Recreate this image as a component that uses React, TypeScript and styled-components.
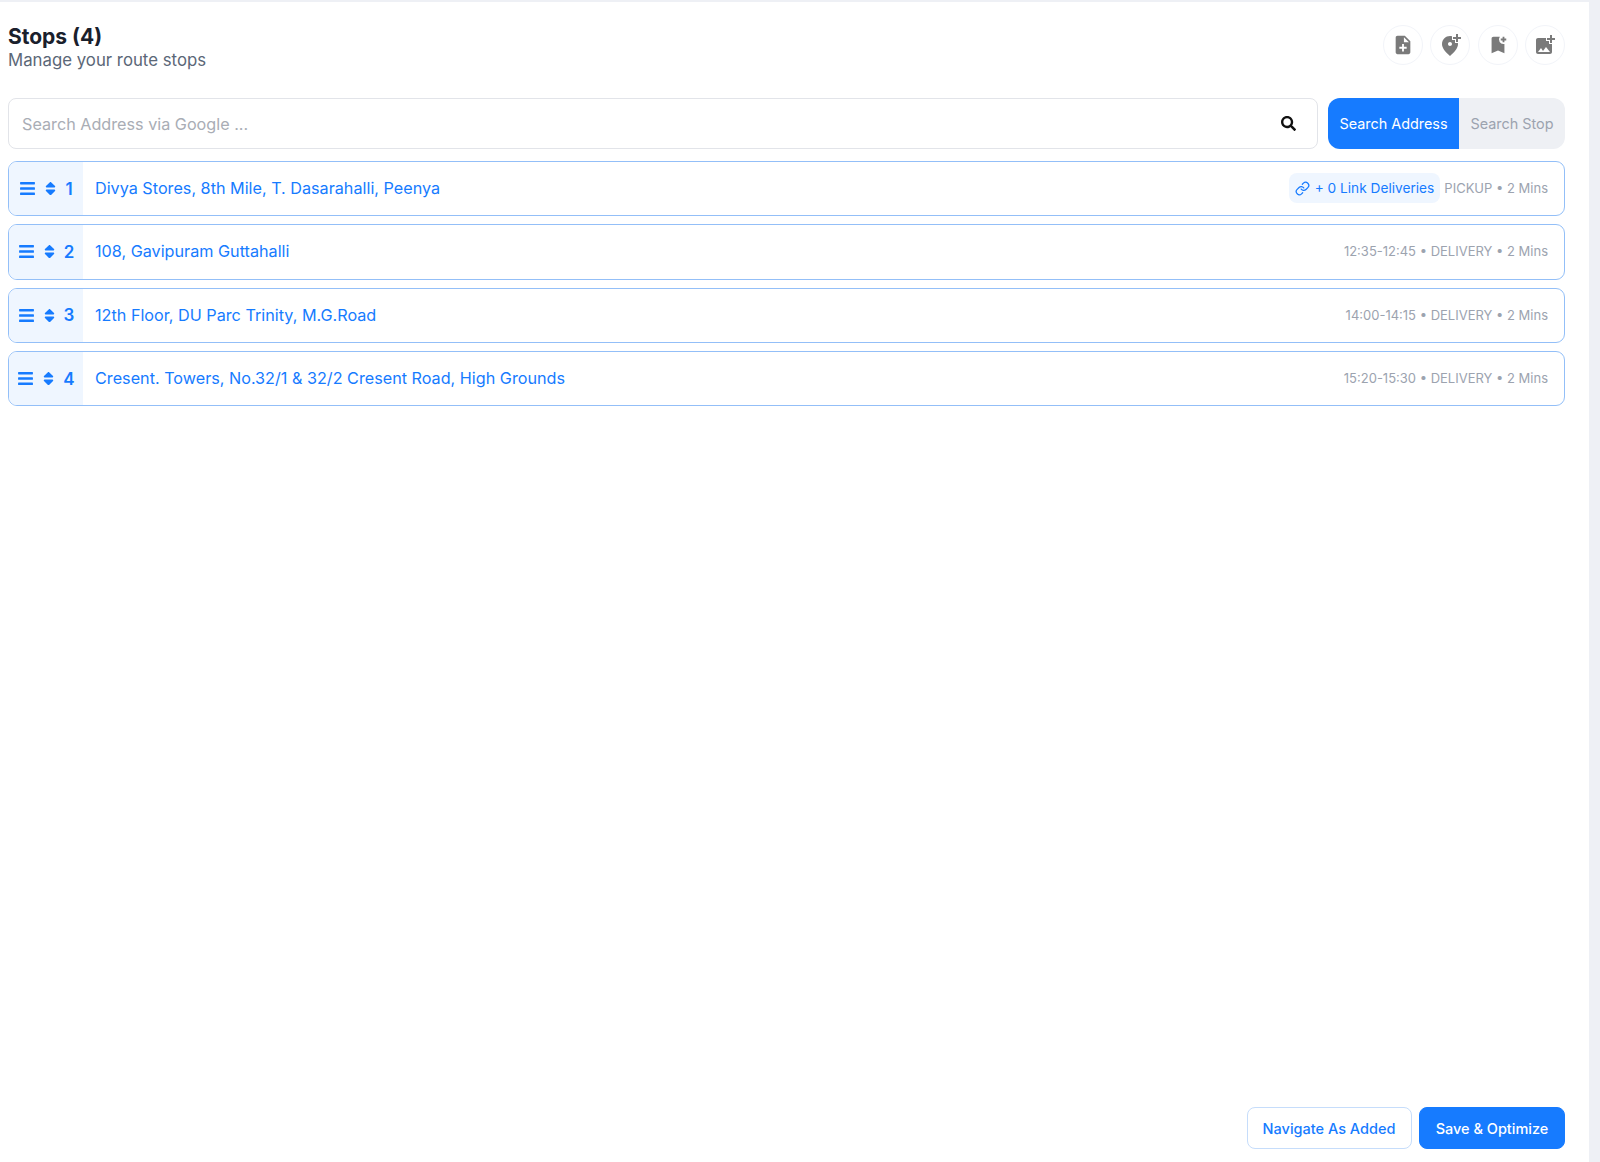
import React from 'react';
import styled, { createGlobalStyle } from 'styled-components';
import { MdNoteAdd, MdAddLocationAlt, MdBookmarkAdd, MdAddPhotoAlternate } from 'react-icons/md';
import { FaBars, FaSort, FaSearch } from 'react-icons/fa';
import { FiLink } from 'react-icons/fi';

const GlobalStyle = createGlobalStyle`
  html, body {
    margin: 0;
    padding: 0;
    background: #eef0f5;
    font-family: 'Inter', 'Liberation Sans', sans-serif;
  }
  * { box-sizing: border-box; }
`;

const Page = styled.div`
  width: 1589px;
  height: 1162px;
  margin-top: 2px;
  padding: 0 24px 15px 8px;
  background: #ffffff;
  display: flex;
  flex-direction: column;
`;

const Header = styled.div`
  display: flex;
  justify-content: space-between;
  align-items: flex-start;
  height: 96px;
  padding-top: 23px;
`;

const Title = styled.div`
  font-size: 21px;
  line-height: 24px;
  font-weight: 700;
  color: #1a202c;
`;

const Subtitle = styled.div`
  font-size: 16.8px;
  line-height: 23px;
  color: #5b6777;
`;

const IconRow = styled.div`
  display: flex;
  gap: 7.5px;
`;

const IconCircle = styled.button`
  width: 40px;
  height: 40px;
  border-radius: 50%;
  border: 1px solid #f2f4f9;
  background: #ffffff;
  color: #7a7a7a;
  display: flex;
  align-items: center;
  justify-content: center;
  padding: 0;
`;

const SearchRow = styled.div`
  display: flex;
  gap: 10px;
  height: 51px;
`;

const SearchBox = styled.div`
  flex: 1;
  display: flex;
  align-items: center;
  justify-content: space-between;
  padding: 0 21px 0 13px;
  border: 1px solid #e2e4e9;
  border-radius: 8px;
`;

const Placeholder = styled.span`
  font-size: 16.2px;
  color: #a9adb5;
`;

const Toggle = styled.div`
  display: flex;
  height: 100%;
  border-radius: 12px;
  overflow: hidden;
`;

const ToggleOption = styled.div<{ $active?: boolean }>`
  display: flex;
  align-items: center;
  justify-content: center;
  width: ${({ $active }) => ($active ? '131px' : '106px')};
  font-size: 14.4px;
  background: ${({ $active }) => ($active ? '#167bff' : '#eef0f4')};
  color: ${({ $active }) => ($active ? '#ffffff' : '#9ca3af')};
`;

const StopList = styled.div`
  display: flex;
  flex-direction: column;
  gap: 8px;
  margin-top: 12px;
`;

const StopRow = styled.div`
  display: flex;
  align-items: stretch;
  height: 55.3px;
  border: 1.4px solid #93bff8;
  border-bottom-width: 1.8px;
  border-radius: 9px;
  overflow: hidden;
`;

const Handle = styled.div`
  width: 74px;
  flex: none;
  background: #eff6ff;
  color: #167bff;
  display: flex;
  align-items: center;
  justify-content: center;
  gap: 6px;
  font-size: 17px;
  font-weight: 600;
`;

const StopBody = styled.div`
  flex: 1;
  display: flex;
  align-items: center;
  justify-content: space-between;
  padding: 0 16px 1px 12px;
`;

const Address = styled.span`
  font-size: 16.2px;
  color: #167bff;
`;

const Meta = styled.div`
  display: flex;
  align-items: center;
  gap: 4px;
  font-size: 13px;
  color: #9ca3af;
`;

const LinkChip = styled.div`
  display: flex;
  align-items: center;
  gap: 5px;
  height: 30px;
  padding: 0 6px;
  border-radius: 8px;
  background: #eff6ff;
  color: #167bff;
  font-size: 13.7px;
`;

const Footer = styled.div`
  margin-top: auto;
  display: flex;
  justify-content: flex-end;
  gap: 7.5px;
`;

const FooterButton = styled.button<{ $primary?: boolean }>`
  height: 42px;
  width: ${({ $primary }) => ($primary ? '146px' : '165px')};
  border-radius: 8px;
  border: 1px solid ${({ $primary }) => ($primary ? '#167bff' : '#c6ddfb')};
  background: ${({ $primary }) => ($primary ? '#167bff' : '#ffffff')};
  color: ${({ $primary }) => ($primary ? '#ffffff' : '#167bff')};
  font-family: inherit;
  font-size: 14.5px;
  font-weight: 500;
  padding: 0;
`;

const stops = [
  { id: 1, address: 'Divya Stores, 8th Mile, T. Dasarahalli, Peenya', meta: 'PICKUP • 2 Mins', linked: true },
  { id: 2, address: '108, Gavipuram Guttahalli', meta: '12:35-12:45 • DELIVERY • 2 Mins' },
  { id: 3, address: '12th Floor, DU Parc Trinity, M.G.Road', meta: '14:00-14:15 • DELIVERY • 2 Mins' },
  { id: 4, address: 'Cresent. Towers, No.32/1 & 32/2 Cresent Road, High Grounds', meta: '15:20-15:30 • DELIVERY • 2 Mins' },
];

const App: React.FC = () => (
  <>
    <GlobalStyle />
    <Page>
      <Header>
        <div>
          <Title>Stops (4)</Title>
          <Subtitle>Manage your route stops</Subtitle>
        </div>
        <IconRow>
          <IconCircle><MdNoteAdd size={22} /></IconCircle>
          <IconCircle><MdAddLocationAlt size={24} /></IconCircle>
          <IconCircle><MdBookmarkAdd size={22} /></IconCircle>
          <IconCircle><MdAddPhotoAlternate size={24} /></IconCircle>
        </IconRow>
      </Header>

      <SearchRow>
        <SearchBox>
          <Placeholder>Search Address via Google ...</Placeholder>
          <FaSearch size={15} color="#111111" />
        </SearchBox>
        <Toggle>
          <ToggleOption $active>Search Address</ToggleOption>
          <ToggleOption>Search Stop</ToggleOption>
        </Toggle>
      </SearchRow>

      <StopList>
        {stops.map((stop) => (
          <StopRow key={stop.id}>
            <Handle>
              <FaBars size={17} />
              <FaSort size={17} />
              <span>{stop.id}</span>
            </Handle>
            <StopBody>
              <Address>{stop.address}</Address>
              <Meta>
                {stop.linked && (
                  <LinkChip>
                    <FiLink size={15} />
                    + 0 Link Deliveries
                  </LinkChip>
                )}
                {stop.meta}
              </Meta>
            </StopBody>
          </StopRow>
        ))}
      </StopList>

      <Footer>
        <FooterButton>Navigate As Added</FooterButton>
        <FooterButton $primary>Save &amp; Optimize</FooterButton>
      </Footer>
    </Page>
  </>
);

export default App;
